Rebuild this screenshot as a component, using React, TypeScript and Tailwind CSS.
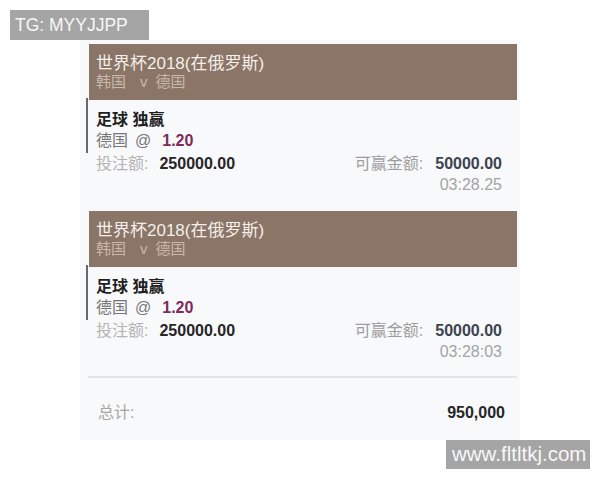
import React from "react";

const font = { fontFamily: '"Liberation Sans", "Noto Sans CJK SC", sans-serif' };

function Card({ time, className }: { time: string; className?: string }) {
  return (
    <div className={"ml-[6px] w-[431px] " + (className ?? "")}>
      <div className="ml-[3px] h-[56px] bg-[#8a7567] pl-[7px] pt-[11px]">
        <div className="text-[17px] leading-[18px] text-[#f4efea]">世界杯2018(在俄罗斯)</div>
        <div className="flex text-[15px] leading-[17px] text-[#c9b8ab]">
          <span>韩国</span>
          <span className="ml-[14px]">v</span>
          <span className="ml-[8px]">德国</span>
        </div>
      </div>
      <div className="-mt-[2px] border-l-2 border-[#6a6a6a] pb-[2px] pl-[8px] pt-[11px] text-[16px] leading-[21px]">
        <div className="font-bold text-[#1f1f1f]">足球 独赢</div>
        <div className="flex text-[#767676]">
          <span>德国</span>
          <span className="ml-[7px]">@</span>
          <span className="ml-[11px] font-bold text-[#7d2a5c]">1.20</span>
        </div>
      </div>
      <div className="pl-[10px] pr-[15px] text-[16px] leading-[21px]">
        <div className="flex justify-between">
          <div className="flex">
            <span className="text-[#b3b3b3]">投注额:</span>
            <span className="ml-[11px] font-bold text-[#262626]">250000.00</span>
          </div>
          <div className="flex">
            <span className="text-[#9d9d9d]">可赢金额:</span>
            <span className="ml-[12px] font-bold text-[#3c4350]">50000.00</span>
          </div>
        </div>
        <div className="flex justify-end text-[#a3a3a3]">{time}</div>
      </div>
    </div>
  );
}

export default function App() {
  return (
    <div className="relative h-[480px] w-[600px] bg-white" style={font}>
      <div className="pl-[80px] pt-[40px]">
        <div className="h-[400px] w-[440px] bg-[#f8f9fb] pt-[4px]">
          <Card time="03:28.25" />
          <Card time="03:28:03" className="mt-[16px]" />
          <div className="ml-[8px] mt-[14px] h-[2px] w-[429px] bg-[#e3e5ea]" />
          <div className="ml-[8px] mt-[24px] flex w-[429px] justify-between pl-[10px] pr-[12px] text-[16px] leading-[21px]">
            <span className="text-[#a6a6a6]">总计:</span>
            <span className="font-bold text-[#262626]">950,000</span>
          </div>
        </div>
      </div>
      <div className="absolute left-[10px] top-[10px] flex h-[30px] w-[139px] items-center bg-[#a5a5a5] pl-[5px] text-[17.5px] text-[#f7f7f7]">
        TG: MYYJJPP
      </div>
      <div className="absolute left-[446px] top-[440px] flex h-[29px] w-[144px] items-center bg-[#a5a5a5] pl-[6px] text-[20.5px] text-[#f7f7f7]">
        www.fltltkj.com
      </div>
    </div>
  );
}
